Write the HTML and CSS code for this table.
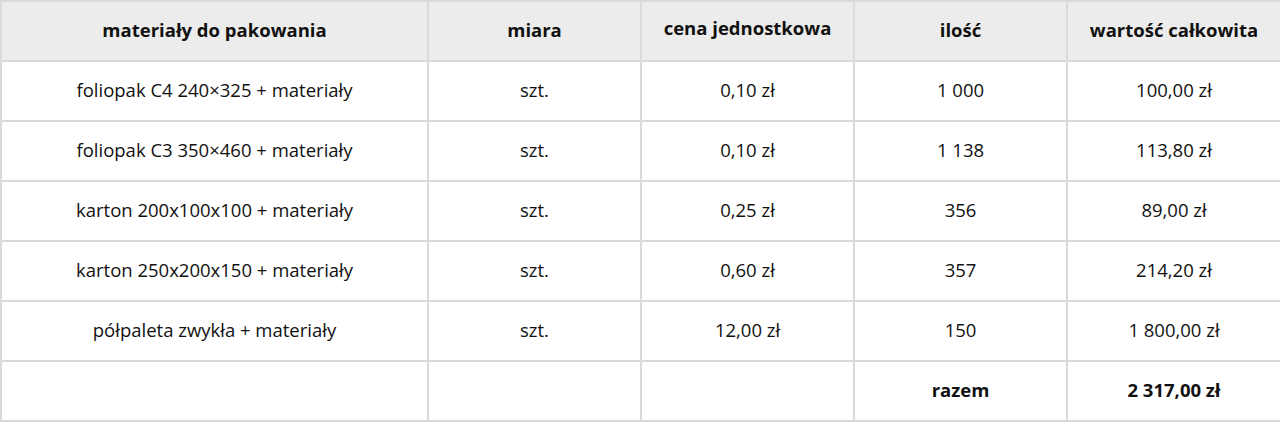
FILE: index.html
```html
<!DOCTYPE html>
<html lang="pl">
<head>
<meta charset="utf-8">
<link rel="stylesheet" href="styles.css">
</head>
<body>
<table class="tbl">
<colgroup>
<col class="c1"><col class="c2"><col class="c2"><col class="c2"><col class="c3">
</colgroup>
<thead>
<tr><th>materiały do pakowania</th><th>miara</th><th class="up">cena jednostkowa</th><th>ilość</th><th>wartość całkowita</th></tr>
</thead>
<tbody>
<tr><td>foliopak C4 240×325 + materiały</td><td>szt.</td><td>0,10 zł</td><td>1 000</td><td>100,00 zł</td></tr>
<tr><td>foliopak C3 350×460 + materiały</td><td>szt.</td><td>0,10 zł</td><td>1 138</td><td>113,80 zł</td></tr>
<tr><td>karton 200x100x100 + materiały</td><td>szt.</td><td>0,25 zł</td><td>356</td><td>89,00 zł</td></tr>
<tr><td>karton 250x200x150 + materiały</td><td>szt.</td><td>0,60 zł</td><td>357</td><td>214,20 zł</td></tr>
<tr><td>półpaleta zwykła + materiały</td><td>szt.</td><td>12,00 zł</td><td>150</td><td>1 800,00 zł</td></tr>
<tr class="sum"><td></td><td></td><td></td><td>razem</td><td>2 317,00 zł</td></tr>
</tbody>
</table>
</body>
</html>
```
FILE: styles.css
```css
html, body {
  margin: 0;
  padding: 0;
  background: #fff;
}
.tbl {
  width: 1280px;
  border-collapse: collapse;
  table-layout: fixed;
  font-family: "Open Sans", "Noto Sans", sans-serif;
  font-size: 18.5px;
  color: #111;
}
.c1 { width: 427px; }
.c2 { width: 213px; }
.c3 { width: 214px; }
.tbl th, .tbl td {
  border: 2px solid #dadada;
  text-align: center;
  vertical-align: middle;
  padding: 0 8px 2px;
  height: 56px;
  line-height: 24px;
}
.tbl th {
  background: #ececec;
  font-weight: 700;
}
.tbl th.up {
  padding-bottom: 6px;
  height: 52px;
}
.sum td {
  font-weight: 700;
}
```
